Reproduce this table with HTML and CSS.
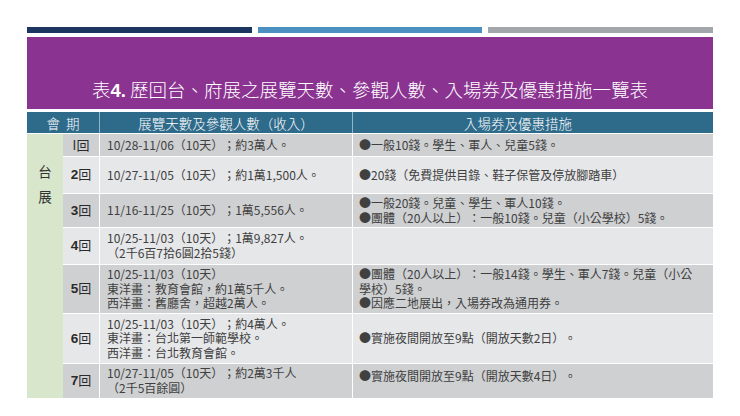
FILE: index.html
```html
<!DOCTYPE html>
<html lang="zh-Hant">
<head>
<meta charset="utf-8">
<title>表4</title>
<link rel="stylesheet" href="styles.css">
</head>
<body>
<div class="page">
  <div class="bars">
    <div class="bar bar-navy"></div>
    <div class="bar bar-blue"></div>
    <div class="bar bar-gray"></div>
  </div>
  <div class="title-box">
    <h1 class="title">表<b>4.</b> 歷回台、府展之展覽天數、參觀人數、入場券及優惠措施一覽表</h1>
  </div>
  <div class="grid">
    <div class="hd hd-term">會&nbsp;&nbsp;期</div>
    <div class="hd hd-days">展覽天數及參觀人數（收入）</div>
    <div class="hd hd-ticket">入場券及優惠措施</div>

    <div class="side"><span>台</span><span>展</span></div>

    <div class="cell num dark">I回</div>
    <div class="cell mid dark">10/28-11/06（10天）；約3萬人。</div>
    <div class="cell txt dark">●一般10錢。學生、軍人、兒童5錢。</div>

    <div class="cell num light"><span><b>2</b>回</span></div>
    <div class="cell mid light">10/27-11/05（10天）；約1萬1,500人。</div>
    <div class="cell txt light">●20錢（免費提供目錄、鞋子保管及停放腳踏車）</div>

    <div class="cell num dark"><span><b>3</b>回</span></div>
    <div class="cell mid dark">11/16-11/25（10天）；1萬5,556人。</div>
    <div class="cell txt dark"><p>●一般20錢。兒童、學生、軍人10錢。</p><p>●團體（20人以上）：一般10錢。兒童（小公學校）5錢。</p></div>

    <div class="cell num light"><span><b>4</b>回</span></div>
    <div class="cell mid light"><p>10/25-11/03（10天）；1萬9,827人。</p><p>（2千6百7拾6圓2拾5錢）</p></div>
    <div class="cell txt light"></div>

    <div class="cell num dark"><span><b>5</b>回</span></div>
    <div class="cell mid dark"><p>10/25-11/03（10天）</p><p>東洋畫：教育會館，約1萬5千人。</p><p>西洋畫：舊廳舍，超越2萬人。</p></div>
    <div class="cell txt dark"><p>●團體（20人以上）：一般14錢。學生、軍人7錢。兒童（小公</p><p>學校）5錢。</p><p>●因應二地展出，入場券改為通用券。</p></div>

    <div class="cell num light"><span><b>6</b>回</span></div>
    <div class="cell mid light"><p>10/25-11/03（10天）；約4萬人。</p><p>東洋畫：台北第一師範學校。</p><p>西洋畫：台北教育會館。</p></div>
    <div class="cell txt light">●實施夜間開放至9點（開放天數2日）。</div>

    <div class="cell num dark"><span><b>7</b>回</span></div>
    <div class="cell mid dark"><p>10/27-11/05（10天）；約2萬3千人</p><p>（2千5百餘圓）</p></div>
    <div class="cell txt dark top">●實施夜間開放至9點（開放天數4日）。</div>
  </div>
</div>
</body>
</html>
```

FILE: styles.css
```css
* { box-sizing: border-box; }
html, body { margin: 0; padding: 0; background: #ffffff; }
body {
  font-family: "Noto Sans CJK TC", "Noto Sans", sans-serif;
  color: #404040;
  text-spacing-trim: space-all;
}
p { margin: 0; }

.page {
  width: 740px;
  height: 416px;
  padding: 27px 27px 0 27px;
}

.bars {
  display: flex;
  gap: 6px;
  height: 6px;
}
.bar { flex: 1; }
.bar-navy { background: #1b365f; }
.bar-blue { background: #4c90c1; }
.bar-gray { background: #a3a7ab; }

.title-box {
  margin-top: 4px;
  height: 72px;
  background: #8a3391;
  display: flex;
  align-items: flex-end;
  justify-content: center;
  padding-bottom: 6px;
}
.title {
  margin: 0;
  font-size: 18.5px;
  line-height: 24px;
  font-weight: 300;
  color: #ffffff;
  white-space: nowrap;
}
.title b { font-weight: 700; font-family: "Liberation Sans", sans-serif; }

.grid {
  margin-top: 3px;
  display: grid;
  grid-template-columns: 36px 37px 253px 360px;
  grid-template-rows: 21px 23px 37px 34px 37px 49px 50px 35px;
}

.hd {
  background: #2e6b8b;
  color: #ffffff;
  font-size: 13.5px;
  font-weight: 300;
  display: flex;
  align-items: center;
  justify-content: center;
}
.hd-term { grid-column: 1 / 3; border-right: 1px solid #8fb6ca; }
.hd-days { border-right: 1px solid #8fb6ca; }
.hd-ticket { padding-right: 30px; }

.side {
  grid-column: 1;
  grid-row: 2 / 9;
  background: #d8e7cb;
  border-top: 1px solid #ffffff;
  display: flex;
  flex-direction: column;
  align-items: center;
  gap: 5px;
  padding-top: 27px;
  font-size: 13.5px;
  line-height: 20px;
  color: #333333;
}

.cell {
  border-top: 1px solid #ffffff;
  font-size: 12px;
  line-height: 14.6px;
  display: flex;
  flex-direction: column;
  justify-content: center;
  white-space: nowrap;
}
.dark { background: #cfd0d2; }
.light { background: #e6e7e9; }

.num {
  align-items: center;
  font-size: 13px;
  color: #2a2a2a;
  border-right: 1px solid #ffffff;
}
.num b { font-weight: 700; font-family: "Liberation Sans", sans-serif; font-size: 13.5px; }
.mid {
  padding-left: 7px;
  border-right: 1px solid #ffffff;
}
.txt { padding-left: 6px; }
.top { justify-content: flex-start; padding-top: 5px; }
```
